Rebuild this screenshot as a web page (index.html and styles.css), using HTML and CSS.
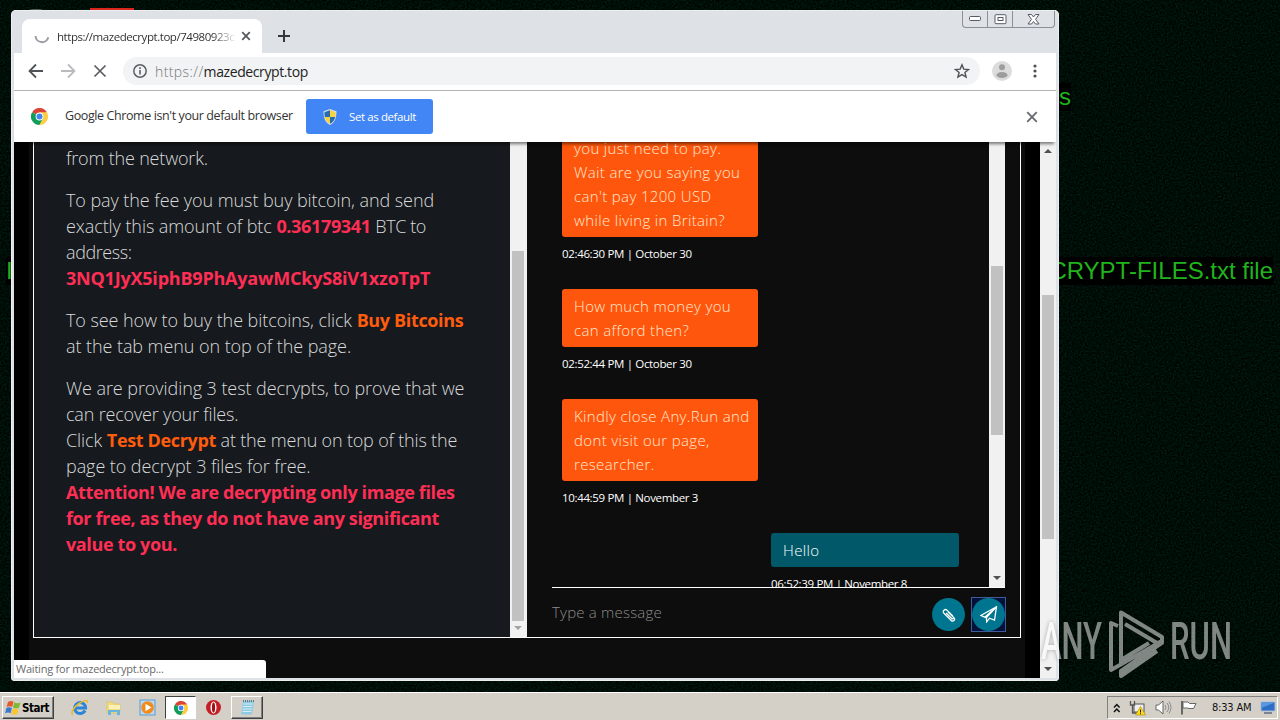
FILE: index.html
```html
<!DOCTYPE html>
<html lang="en">
<head>
    <meta charset="UTF-8">
    <meta name="viewport" content="width=device-width, initial-scale=1.0">
    <title>Desktop</title>
    <link rel="stylesheet" href="styles.css">
</head>
<body>

    <svg class="grain" width="1280" height="692">
        <filter id="noise" color-interpolation-filters="sRGB">
            <feTurbulence type="fractalNoise" baseFrequency="0.55" numOctaves="3" seed="4"/>
            <feColorMatrix values="0 0 0 0 0  0 .2 0 0 -.045  0 .13 0 0 -.035  0 0 0 0 1"/>
        </filter>
        <rect width="1280" height="692" filter="url(#noise)"/>
    </svg>

    <div class="wall-text wall-s">s</div>
    <div class="wall-text wall-file">CRYPT-FILES.txt file</div>
    <div class="wall-text wall-left">I</div>
    <div class="icon-red"></div>
    <div class="icon-gray"></div>

    <div class="window">
        <div class="tabstrip">
            <div class="tab">
                <svg class="spinner" width="16" height="16" viewBox="0 0 16 16"><path d="M1.500 8a6.500 6.500 0 0 0 12.800 1.200" fill="none" stroke="#9a9da1" stroke-width="2"/></svg>
                <span class="tab-title">https://mazedecrypt.top/74980923c</span>
                <svg width="10" height="10" viewBox="0 0 10 10"><path d="M1.200 1.200l7.600 7.600M8.800 1.200L1.200 8.800" stroke="#54575b" stroke-width="1.700"/></svg>
            </div>
            <svg class="new-tab" width="12" height="12" viewBox="0 0 12 12"><path d="M6 0v12M0 6h12" stroke="#34373b" stroke-width="2"/></svg>
            <div class="controls">
                <span><svg width="13" height="6" viewBox="0 0 13 6"><rect x=".5" y=".5" width="11" height="4" rx="1" fill="#fff" stroke="#555a66"/></svg></span>
                <span><svg width="13" height="11" viewBox="0 0 13 11"><rect x="1" y=".7" width="11" height="9" rx="1" fill="#fff" stroke="#555a66"/><rect x="4" y="3.500" width="5" height="3" fill="#fff" stroke="#555a66"/></svg></span>
                <span class="wide"><svg width="13" height="11" viewBox="0 0 13 11"><path d="M1 .5h3.500l2 2.500 2-2.500H12L8.500 5.300 12 10H8.500l-2-2.500-2 2.500H1l3.500-4.700z" fill="#fff" stroke="#555a66"/></svg></span>
            </div>
        </div>

        <div class="toolbar">
            <svg width="16" height="16" viewBox="0 0 16 16"><path d="M15 8H2M8 1.500L1.500 8 8 14.500" fill="none" stroke="#505357" stroke-width="1.800"/></svg>
            <svg width="16" height="16" viewBox="0 0 16 16"><path d="M1 8h13M8 1.500L14.500 8 8 14.500" fill="none" stroke="#b9bbbe" stroke-width="1.800"/></svg>
            <svg width="16" height="16" viewBox="0 0 16 16"><path d="M2.500 2.500l11 11M13.500 2.500l-11 11" stroke="#5a5d61" stroke-width="1.700"/></svg>
            <div class="omnibox">
                <svg width="14" height="14" viewBox="0 0 14 14"><circle cx="7" cy="7" r="6.200" fill="none" stroke="#5c6065" stroke-width="1.500"/><path d="M7 6v4.500M7 3.300v1.600" stroke="#5c6065" stroke-width="1.600"/></svg>
                <span class="url"><i>https://</i>mazedecrypt.top</span>
                <svg class="star" width="16" height="16" viewBox="0 0 16 16"><path d="M8 1.800l1.800 4.300 4.700.4-3.600 3 1.200 4.600L8 11.600l-4.100 2.500 1.200-4.600-3.600-3 4.700-.4z" fill="none" stroke="#505357" stroke-width="1.400"/></svg>
            </div>
            <svg class="avatar" width="20" height="20" viewBox="0 0 20 20"><circle cx="10" cy="10" r="10" fill="#dcdcdc"/><circle cx="10" cy="6.200" r="3" fill="#9d9d9d"/><ellipse cx="10" cy="14" rx="5.600" ry="3" fill="#9d9d9d"/></svg>
            <svg class="dots" width="4" height="14" viewBox="0 0 4 14"><g fill="#4d5054"><circle cx="2" cy="2" r="1.600"/><circle cx="2" cy="7" r="1.600"/><circle cx="2" cy="12" r="1.600"/></g></svg>
        </div>

        <div class="infobar">
            <svg width="17" height="17" viewBox="0 0 48 48">
                <path d="M24 24L3.200 12A24 24 0 0 1 44.800 12z" fill="#db4437"/>
                <path d="M24 24L3.200 12A24 24 0 0 0 24 48L34 30z" fill="#0f9d58"/>
                <path d="M24 24l10 6L24 48A24 24 0 0 0 44.800 12H24z" fill="#ffcd40"/>
                <circle cx="24" cy="24" r="11" fill="#fff"/><circle cx="24" cy="24" r="8.500" fill="#4285f4"/>
            </svg>
            <span class="info-text">Google Chrome isn't your default browser</span>
            <button class="default-btn">
                <svg width="14" height="16" viewBox="0 0 14 16">
                    <path d="M7 0l6.500 2.300C13.500 9 12 13.500 7 16 2 13.500.5 9 .5 2.300z" fill="#d5dde0"/>
                    <path d="M7 1.300V8H1.800C1.500 6.300 1.500 5 1.500 3.200z" fill="#276cb0"/>
                    <path d="M7 1.300V8h5.200c.3-1.700.3-3 .3-4.800z" fill="#f5d43c"/>
                    <path d="M7 14.800V8H1.800c.7 3.200 2.200 5.400 5.200 6.800z" fill="#f5d43c"/>
                    <path d="M7 14.800V8h5.200c-.7 3.200-2.200 5.400-5.200 6.800z" fill="#276cb0"/>
                </svg>
                <span>Set as default</span>
            </button>
            <svg class="info-close" width="12" height="12" viewBox="0 0 12 12"><path d="M1.200 1.200l9.600 9.600M10.800 1.200l-9.600 9.600" stroke="#66696d" stroke-width="1.800"/></svg>
        </div>

        <div class="page">
            <div class="page-body">
                <div class="card">
                    <div class="note">
                        <p><span class="tight">from the network.</span></p>
                        <p>To pay the fee you must buy bitcoin, and send<br>
                            exactly this amount of btc <b>0.36179341</b> <span class="tighter">BTC to</span><br>
                            <span class="tighter">address:</span><br>
                            <b class="wallet">3NQ1JyX5iphB9PhAyawMCkyS8iV1xzoTpT</b></p>
                        <p>To see how to buy the bitcoins, click <b class="orange">Buy Bitcoins</b><br>
                            at the tab menu on top of the page.</p>
                        <p>We are providing 3 test decrypts, to prove that we<br>
                            <span class="tight">can recover your files.</span><br>
                            Click <b class="orange">Test Decrypt</b> <span class="tight">at the menu on top of this the</span><br>
                            page to decrypt 3 files for free.<br>
                            <b class="warn">Attention! We are decrypting only image files<br>
                            for free, as they do not have any significant<br>
                            value to you.</b></p>
                    </div>
                    <div class="scrollbar note-scroll">
                        <div class="thumb"></div>
                        <div class="arrow down"></div>
                    </div>
                    <div class="chat">
                        <div class="log">
                            <div class="messages">
                                <div class="bubble first">you just need to pay.<br>Wait are you saying you<br>can't pay 1200 USD<br>while living in Britain?</div>
                                <div class="time">02:46:30 PM | October 30</div>
                                <div class="bubble">How much money you<br>can afford then?</div>
                                <div class="time">02:52:44 PM | October 30</div>
                                <div class="bubble">Kindly close Any.Run and<br>dont visit our page,<br>researcher.</div>
                                <div class="time">10:44:59 PM | November 3</div>
                                <div class="bubble mine">Hello</div>
                                <div class="time mine">06:52:39 PM | November 8</div>
                            </div>
                            <div class="scrollbar log-scroll">
                                <div class="thumb"></div>
                                <div class="arrow down dark"></div>
                            </div>
                        </div>
                        <div class="compose">
                            <span class="placeholder">Type a message</span>
                            <span class="round"><svg width="16" height="16" viewBox="0 0 16 16"><path d="M11.800 9L6.200 3.400C4 1.200.8 4 3 6.300l7.200 7.200c1.800 1.700 4.600-.6 2.900-2.500L7 4.900M5.200 6l5.400 5.500c.9.800 1.900-.1 1.200-1" fill="none" stroke="#fff" stroke-width="1.300"/></svg></span>
                            <span class="send"><span class="round"><svg width="18" height="17" viewBox="0 0 18 17"><path d="M16.500.8L.8 9.500l4 1.700L16.500.8l-2 13.400-5-2-2.800 3.600-.3-4.200L16.500.8" fill="none" stroke="#fff" stroke-width="1.300"/><path d="M5 11.200L15 2.500l-8.300 9v4.500l-.8-3.500z" fill="#fff"/></svg></span></span>
                        </div>
                    </div>
                </div>
            </div>
            <div class="scrollbar page-scroll">
                <div class="arrow up dark"></div>
                <div class="thumb"></div>
                <div class="arrow down dark"></div>
            </div>
            <div class="status">Waiting for mazedecrypt.top...</div>
        </div>
    </div>

    <svg class="watermark" width="202" height="70" viewBox="0 0 202 70">
        <g fill="#fff" font-family="Roboto, sans-serif" font-size="52" font-weight="500">
            <text x="10" y="51" textLength="61" lengthAdjust="spacingAndGlyphs">ANY</text>
            <text x="139" y="51" textLength="62" lengthAdjust="spacingAndGlyphs">RUN</text>
        </g>
        <g fill="none" stroke="#fff" stroke-width="4" stroke-linejoin="round">
            <path d="M90 55V4.500L131 29v5l-5 1-32-19"/>
            <path d="M87 18l-7-3v47l51-29M90 52l28-17M132 34L90 63v5l36-25"/>
        </g>
    </svg>

    <div class="taskbar">
        <div class="start">
            <svg width="17" height="16" viewBox="0 0 17 16">
                <path d="M3 2c2-1.300 3.800-1.300 5.500-.2L7.200 7C5.500 6 3.600 6 1.600 7z" fill="#e8572b"/>
                <path d="M9.300 2.300c2 1.200 4 1.200 6.200.2L14 7.800c-2 1-4 1-6 0z" fill="#7fba35"/>
                <path d="M1.400 8c2-1 3.800-1 5.500 0l-1.300 5.200c-1.700-1-3.500-1-5.500 0z" fill="#3a79d0"/>
                <path d="M7.700 8.600c2 1 4 1 6 .1l-1.400 5.200c-2 1-4 1-6 0z" fill="#fcc630"/>
            </svg>
            <span>Start</span>
        </div>
        <div class="quick">
            <div class="task"><svg width="18" height="18" viewBox="0 0 18 18"><path d="M14 11.500A5.500 5.500 0 1 1 14.600 9H5" fill="none" stroke="#2b86d8" stroke-width="3"/><path d="M2 15.500C-1 15 2.500 8 8 4.500S17.500.5 16 4" fill="none" stroke="#e9b92e" stroke-width="1.500"/></svg></div>
            <div class="task"><svg width="18" height="18" viewBox="0 0 18 18"><path d="M2 3h6l1 2h6v9H2z" fill="#f0dc7c" stroke="#d9bf57" stroke-width=".6"/><path d="M4 6h11v4H4z" fill="#fbf1b8"/><path d="M3 16v-5h12v5h-3v-3H6v3z" fill="#68b6e0"/></svg></div>
            <div class="task"><svg width="18" height="18" viewBox="0 0 18 18"><rect x="1" y="1" width="15" height="15" fill="#b9d9f2" stroke="#5b9bd1"/><circle cx="8.500" cy="8.500" r="6.300" fill="#f28a1c"/><path d="M6.500 4.800v7.500l6-3.800z" fill="#fff"/></svg></div>
            <div class="task active"><svg width="14" height="14" viewBox="0 0 48 48">
                <path d="M24 24L3.200 12A24 24 0 0 1 44.800 12z" fill="#db4437"/>
                <path d="M24 24L3.200 12A24 24 0 0 0 24 48L34 30z" fill="#0f9d58"/>
                <path d="M24 24l10 6L24 48A24 24 0 0 0 44.800 12H24z" fill="#ffcd40"/>
                <circle cx="24" cy="24" r="11" fill="#fff"/><circle cx="24" cy="24" r="8.500" fill="#4285f4"/>
            </svg></div>
            <div class="task opera"><svg width="17" height="17" viewBox="0 0 17 17"><circle cx="8.500" cy="8.500" r="7.500" fill="#c51f25"/><ellipse cx="8.500" cy="8.500" rx="3" ry="6" fill="#fff"/><ellipse cx="8.500" cy="8.500" rx="1.600" ry="5" fill="#a11319"/></svg></div>
            <div class="task raised"><svg width="17" height="17" viewBox="0 0 17 17"><path d="M4 2h11l-2 13.500H2z" fill="#8ecbe3"/><path d="M4.500 5h9M4 7.500h9M3.700 10h9M3.300 12.500h9" stroke="#d5eef7"/><path d="M4 2h11" stroke="#637c88" stroke-width="2" stroke-dasharray="1 1"/></svg></div>
        </div>
        <div class="tray">
            <svg width="8" height="10" viewBox="0 0 8 10"><path d="M1 4.500l2.800-3 2.800 3M1 9l2.800-3 2.800 3" fill="none" stroke="#111" stroke-width="1.500"/></svg>
            <svg width="17" height="16" viewBox="0 0 17 16"><rect x="5" y="4" width="10" height="8" fill="#efefef" stroke="#555"/><path d="M1.500 1v4h4V1M3.500 5v8h4" fill="none" stroke="#555" stroke-width="1.300"/><path d="M11.500 6.500l5 8.500h-10z" fill="#ffd91c" stroke="#a58a00" stroke-width=".6"/><path d="M11.500 9.500v3M11.500 13.200v1" stroke="#222"/></svg>
            <svg width="17" height="15" viewBox="0 0 17 15"><path d="M1 5h2.500L8 1v13l-4.500-4H1z" fill="#fff" stroke="#666"/><path d="M10 5q2 2.500 0 5M12 3q3.500 4.500 0 9M14 1.500q4 6 0 12" fill="none" stroke="#8b8b8b"/></svg>
            <svg width="18" height="15" viewBox="0 0 18 15"><path d="M3 2h5l1.500 1.500H16l-2.500 5H9L7.500 8H3z" fill="#fff" stroke="#666"/><path d="M2 1v13.500" stroke="#666" stroke-width="2"/></svg>
            <span class="clock">8:33 AM</span>
            <svg width="16" height="13" viewBox="0 0 16 13"><path d="M1 1h14v9H1z" fill="#2d6fc4" stroke="#a9bdd6"/><path d="M1.500 1.500h13L1.500 7z" fill="#5998e0"/><path d="M4 12h8" stroke="#5d6d80" stroke-width="1.500"/></svg>
        </div>
    </div>

</body>
</html>
```

FILE: styles.css
```css
body {
    margin: 0;
    width: 1280px;
    height: 720px;
    position: relative;
    overflow: hidden;
    background-color: #000e08;
    font-family: "Open Sans", "Noto Sans", sans-serif;
}
svg {
    display: block;
    flex-shrink: 0;
}
.grain {
    position: absolute;
    top: 0;
    left: 0;
}

/* desktop behind the window */
.wall-text {
    position: absolute;
    background-color: #000;
    color: #20b41c;
    font-family: "Liberation Sans", Arial, sans-serif;
    font-size: 24px;
    line-height: 28px;
    white-space: nowrap;
}
.wall-s {
    top: 83px;
    right: 209px;
}
.wall-file {
    top: 257px;
    right: 7px;
}
.wall-left {
    top: 257px;
    left: 6px;
}
.icon-red {
    position: absolute;
    left: 90px;
    top: 8px;
    width: 44px;
    height: 5px;
    background-color: #d8261c;
}
.icon-gray {
    position: absolute;
    left: 24px;
    top: 9px;
    width: 24px;
    height: 10px;
    border-radius: 50%;
    background-color: #59605c;
}

/* browser window */
.window {
    position: absolute;
    left: 11px;
    top: 10px;
    width: 1042px;
    height: 668px;
    padding: 0 3px 3px;
    background-color: #dee1e6;
    border-radius: 5px 5px 4px 4px;
    display: flex;
    flex-direction: column;
    box-shadow: inset 0 0 0 1px #eceef0;
}
.tabstrip {
    height: 43px;
    display: flex;
    align-items: flex-end;
}
.tab {
    width: 218px;
    height: 34px;
    margin-left: 8px;
    padding: 0 10px 0 12px;
    background-color: #fff;
    border-radius: 8px 8px 0 0;
    display: flex;
    align-items: center;
}
.tab-title {
    width: 178px;
    margin: 0 6px 0 7px;
    font-size: 11.5px;
    letter-spacing: -0.45px;
    color: #333;
    overflow: hidden;
    white-space: nowrap;
    -webkit-mask-image: linear-gradient(to right, #000 155px, transparent 180px);
}
.new-tab {
    margin: 0 0 11px 16px;
}
.controls {
    display: flex;
    align-self: flex-start;
    margin: 1px 1px 0 auto;
    border: 1px solid #8a8f98;
    border-top: none;
    border-radius: 0 0 4px 4px;
}
.controls span {
    width: 24px;
    height: 16px;
    display: flex;
    align-items: center;
    justify-content: center;
    border-right: 1px solid #8a8f98;
}
.controls .wide {
    width: 41px;
    border-right: none;
}
.toolbar {
    height: 36px;
    display: flex;
    align-items: center;
    background-color: #fff;
    border-bottom: 1px solid #b3b3b3;
    padding: 0 0 1px 14px;
    gap: 16px;
}
.omnibox {
    width: 837px;
    height: 28px;
    padding: 0 10px;
    margin-left: -1px;
    border-radius: 14px;
    background-color: #f1f3f4;
    display: flex;
    align-items: center;
}
.url {
    margin-left: 8px;
    font-size: 14px;
    color: #222;
    letter-spacing: -0.4px;
}
.url i {
    font-style: normal;
    font-weight: 300;
    color: #777;
    letter-spacing: 0.4px;
}
.star {
    margin-left: auto;
}
.avatar {
    margin-left: -4px;
}
.dots {
    margin-left: 5px;
}
.infobar {
    height: 51px;
    display: flex;
    align-items: center;
    background-color: #fff;
    padding: 0 18px 0 17px;
    position: relative;
    z-index: 2;
    box-shadow: 0 4px 3px -2px rgba(0, 0, 0, 0.5);
}
.info-text {
    width: 241px;
    margin: -2px 0 0 17px;
    font-size: 12.5px;
    color: #333;
    white-space: nowrap;
    letter-spacing: -0.4px;
}
.default-btn {
    width: 127px;
    height: 35px;
    padding: 0 0 0 17px;
    border: none;
    border-radius: 3px;
    background-color: #4285f4;
    color: #fff;
    font-family: inherit;
    font-size: 11.5px;
    letter-spacing: -0.4px;
    display: flex;
    align-items: center;
    gap: 12px;
    white-space: nowrap;
}
.info-close {
    margin-left: auto;
}

/* web page */
.page {
    height: 536px;
    display: flex;
    position: relative;
    background-color: #000;
}
.page-body {
    width: 996px;
    margin: 0 15px;
    background-color: #0d0d0d;
}
.card {
    width: 986px;
    height: 495px;
    margin-left: 4px;
    border: 1px solid #fff;
    border-top: none;
    display: flex;
    overflow: hidden;
}
.note {
    width: 444px;
    padding: 3px 0 0 32px;
    background-color: #16191d;
    color: #d9dadb;
    font-size: 18px;
    font-weight: 300;
    line-height: 26px;
    letter-spacing: -0.07px;
    white-space: nowrap;
}
.note p {
    margin: 0 0 16px;
}
.note b {
    font-weight: 700;
    color: #ff2e55;
    letter-spacing: -0.35px;
}
.note b.orange {
    color: #ff5d0e;
}
.note b.wallet {
    letter-spacing: -0.21px;
}
.note b.warn {
    letter-spacing: -0.37px;
}
.tight {
    letter-spacing: -0.18px;
}
.tighter {
    letter-spacing: -0.4px;
}
.scrollbar {
    width: 16px;
    flex-shrink: 0;
    box-sizing: border-box;
    background-color: #f1f1f1;
    display: flex;
    flex-direction: column;
    align-items: center;
}
.thumb {
    width: 12px;
    background-color: #c1c1c1;
}
.arrow {
    border: 4px solid transparent;
}
.arrow.down {
    border-bottom: none;
    border-top-color: #a3a3a3;
    margin: auto 0 7px;
}
.arrow.up {
    border-top: none;
    border-bottom-color: #505050;
    margin: 7px 0 0;
}
.arrow.down.dark {
    border-top-color: #505050;
}
.note-scroll {
    width: 17px;
    padding-right: 1px;
}
.note-scroll .thumb {
    height: 370px;
    margin-top: 109px;
}
.log-scroll .thumb {
    height: 169px;
    margin-top: 124px;
}
.page-scroll .thumb {
    height: 244px;
    margin-top: 142px;
}
.chat {
    width: 453px;
    padding: 0 15px 0 25px;
}
.log {
    height: 445px;
    display: flex;
    border-bottom: 1px solid #fff;
    overflow: hidden;
}
.messages {
    width: 397px;
    padding: 0 30px 0 10px;
    display: flex;
    flex-direction: column;
    align-items: flex-start;
}
.bubble {
    width: 184px;
    flex-shrink: 0;
    padding: 5px 0 5px 12px;
    border-radius: 3px;
    background-color: #ff560d;
    color: #ffe9cf;
    font-size: 15px;
    font-weight: 300;
    line-height: 24px;
    letter-spacing: 0.35px;
    white-space: nowrap;
}
.bubble.first {
    margin-top: -6px;
    padding-top: 0;
}
.bubble.mine {
    width: 176px;
    height: 24px;
    align-self: flex-end;
    background-color: #005868;
    color: #fff;
}
.time {
    height: 52px;
    flex-shrink: 0;
    font-size: 11.5px;
    line-height: 34px;
    color: #fff;
    letter-spacing: -0.34px;
    white-space: nowrap;
}
.time.mine {
    width: 188px;
    align-self: flex-end;
}
.compose {
    height: 49px;
    display: flex;
    align-items: center;
    padding-top: 4px;
    box-sizing: border-box;
}
.placeholder {
    flex-grow: 1;
    margin-top: -5px;
    font-size: 15px;
    font-weight: 300;
    color: #8b8b8b;
    letter-spacing: 0.2px;
}
.round {
    width: 33px;
    height: 33px;
    border-radius: 50%;
    background-color: #00758f;
    display: flex;
    align-items: center;
    justify-content: center;
}
.send {
    margin: 0 -1px 0 6px;
    border: 1px solid #3e5c9c;
    background-color: #04123a;
}
.status {
    position: absolute;
    left: 0;
    bottom: 0;
    width: 250px;
    height: 18px;
    padding-left: 2px;
    background-color: #fff;
    border-radius: 0 3px 0 0;
    font-size: 11px;
    line-height: 18px;
    letter-spacing: -0.22px;
    color: #6a6a6a;
}
.watermark {
    position: absolute;
    left: 1031px;
    top: 608px;
    opacity: 0.5;
    filter: drop-shadow(0 0 2px rgba(0, 0, 0, 0.6));
}

/* taskbar */
.taskbar {
    position: absolute;
    left: 0;
    bottom: 0;
    width: 1280px;
    height: 28px;
    padding: 3px 2px 1px;
    box-sizing: border-box;
    border-top: 1px solid #fff;
    background-color: #d4d0c8;
    display: flex;
    align-items: stretch;
}
.start {
    width: 48px;
    padding-left: 2px;
    border: 1px solid;
    border-color: #fff #404040 #404040 #fff;
    box-shadow: inset -1px -1px #808080;
    display: flex;
    align-items: center;
    font-family: "DejaVu Sans Condensed", "Open Sans", sans-serif;
    font-size: 11.5px;
    font-weight: 700;
    letter-spacing: -0.5px;
}
.quick {
    display: flex;
    margin-left: 10px;
    gap: 2px;
}
.task {
    width: 32px;
    box-sizing: border-box;
    display: flex;
    align-items: center;
    justify-content: center;
}
.task.active {
    width: 31px;
    margin-left: -1px;
    background-color: #fff;
    border: 1px solid;
    border-color: #404040 #fff #fff #404040;
}
.task.opera {
    margin-left: -1px;
}
.task.raised {
    border: 1px solid;
    border-color: #fff #404040 #404040 #fff;
    box-shadow: inset -1px -1px #808080;
}
.tray {
    width: 163px;
    margin-left: auto;
    padding: 0 1px 0 5px;
    border: 1px solid;
    border-color: #808080 #fff #fff #808080;
    display: flex;
    align-items: center;
    justify-content: space-between;
}
.clock {
    margin-left: 5px;
    font-size: 11px;
    font-family: "DejaVu Sans Condensed", sans-serif;
    letter-spacing: -0.15px;
    color: #111;
}
```
